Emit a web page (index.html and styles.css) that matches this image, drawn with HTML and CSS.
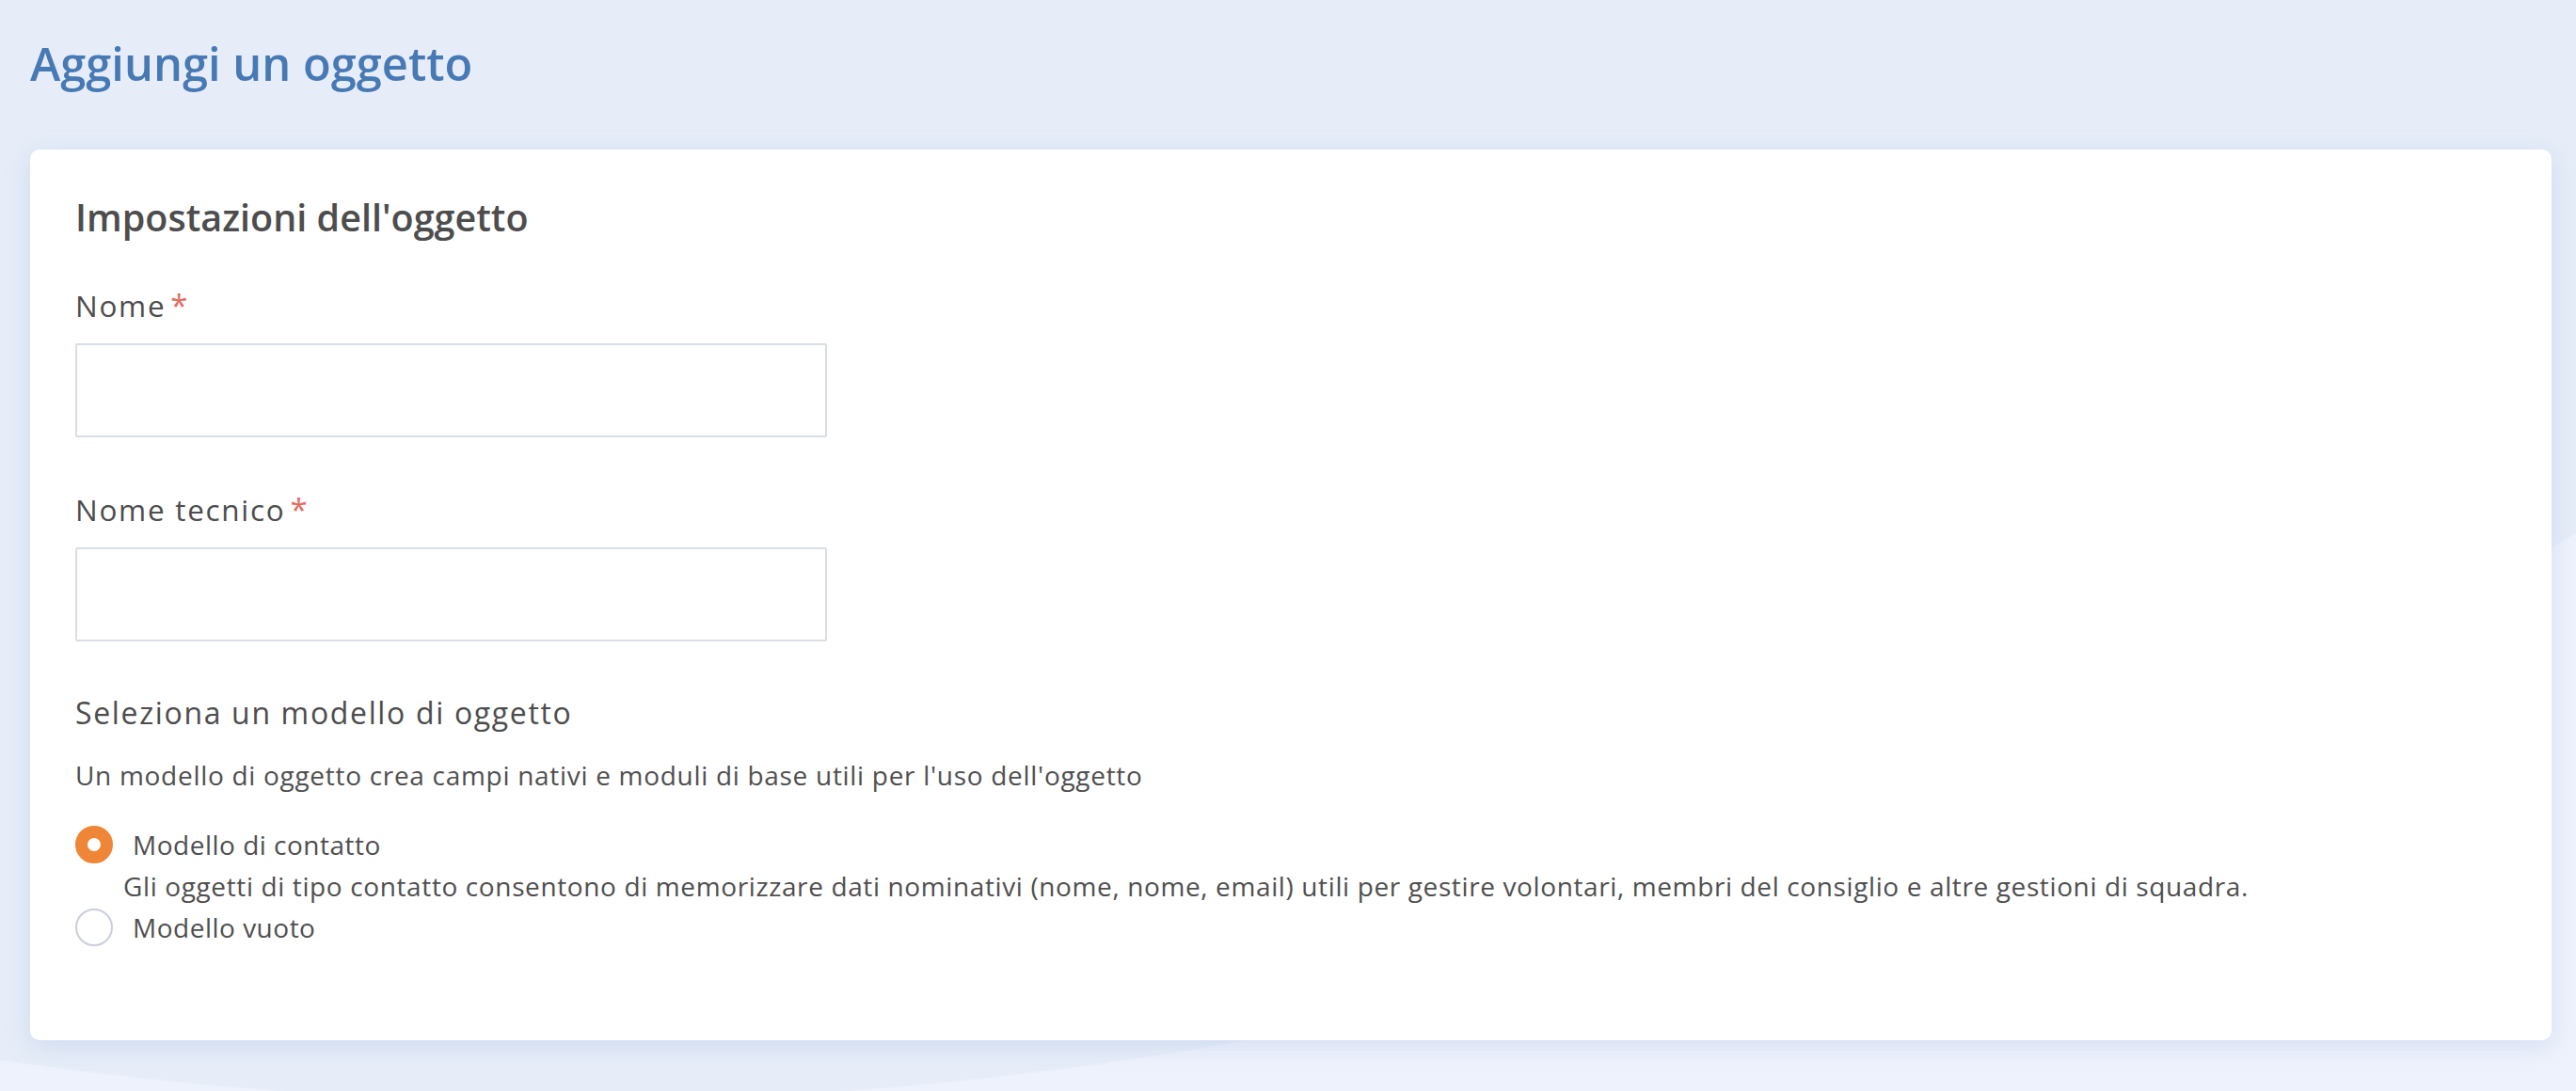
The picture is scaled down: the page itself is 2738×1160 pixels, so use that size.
FILE: index.html
```html
<!DOCTYPE html>
<html lang="it">
<head>
<meta charset="utf-8">
<title>Aggiungi un oggetto</title>
<link rel="stylesheet" href="styles.css">
</head>
<body>
<header class="page-header">
  <h1 class="page-title">Aggiungi un oggetto</h1>
</header>
<main class="card">
  <h2 class="card-title">Impostazioni dell'oggetto</h2>

  <div class="field">
    <label class="field-label" for="nome">Nome<span class="req">*</span></label>
    <input class="text-input" id="nome" type="text">
  </div>

  <div class="field field-next">
    <label class="field-label" for="tecnico">Nome tecnico<span class="req">*</span></label>
    <input class="text-input" id="tecnico" type="text">
  </div>

  <section class="template">
    <h3 class="template-title">Seleziona un modello di oggetto</h3>
    <p class="template-hint">Un modello di oggetto crea campi nativi e moduli di base utili per l'uso dell'oggetto</p>

    <div class="options">
      <div class="option">
        <span class="radio radio-on"></span>
        <span class="option-label">Modello di contatto</span>
      </div>
      <p class="option-desc">Gli oggetti di tipo contatto consentono di memorizzare dati nominativi (nome, nome, email) utili per gestire volontari, membri del consiglio e altre gestioni di squadra.</p>
      <div class="option">
        <span class="radio"></span>
        <span class="option-label">Modello vuoto</span>
      </div>
    </div>
  </section>
</main>
</body>
</html>
```

FILE: styles.css
```css
html, body {
  margin: 0;
  padding: 0;
}

body {
  width: 2738px;
  height: 1160px;
  box-sizing: border-box;
  padding: 0 26px 0 32px;
  overflow: hidden;
  font-family: "Open Sans", "Liberation Sans", sans-serif;
  color: #4f4f4f;
  background: radial-gradient(circle 4089px at 599px -2918px, #e6edf8 4088px, #eef2fc 4090px);
}

.page-header {
  padding-top: 39px;
  height: 159px;
  box-sizing: border-box;
}

.page-title {
  margin: 0;
  font-size: 48.8px;
  line-height: 56px;
  font-weight: 600;
  color: #4779b5;
}

.card {
  background: #ffffff;
  border-radius: 10px;
  box-shadow: 0 6px 26px rgba(150, 170, 220, 0.28);
  padding: 49px 48px 0;
  height: 947px;
  box-sizing: border-box;
}

.card-title {
  margin: 0;
  font-size: 39.5px;
  line-height: 46px;
  font-weight: 600;
  color: #4d4d4d;
}

.field {
  margin-top: 53px;
  display: flex;
  flex-direction: column;
  align-items: flex-start;
}

.field-next {
  margin-top: 59px;
}

.field-label {
  font-size: 31.5px;
  line-height: 36px;
  letter-spacing: 1.7px;
  color: #4d4d4d;
  margin-bottom: 22px;
}

.req {
  color: #e46a5e;
  margin-left: 5px;
  font-size: 33px;
  letter-spacing: 0;
}

.text-input {
  width: 799px;
  height: 100px;
  box-sizing: border-box;
  border: 2px solid #d9dee7;
  border-radius: 2px;
  background: #ffffff;
  margin: 0;
  padding: 0 16px;
  font: inherit;
  outline: none;
}

.template {
  margin-top: 57px;
}

.template-title {
  margin: 0;
  font-size: 32px;
  line-height: 37px;
  font-weight: 500;
  letter-spacing: 1.65px;
  color: #4d4d4d;
}

.template-hint {
  margin: 32px 0 0;
  font-size: 28px;
  line-height: 32px;
  letter-spacing: 0.7px;
  color: #4f4f4f;
}

.options {
  margin-top: 38px;
}

.option {
  display: flex;
  align-items: center;
  gap: 21px;
  height: 40px;
}

.radio {
  width: 40px;
  height: 40px;
  box-sizing: border-box;
  border-radius: 50%;
  border: 2px solid #c9ced9;
  background: #ffffff;
  flex: none;
}

.radio-on {
  border: 13px solid #ef8536;
  background: #ffffff;
}

.option-label {
  font-size: 28px;
  line-height: 32px;
  letter-spacing: 0.5px;
  color: #4f4f4f;
}

.option-desc {
  margin: 8px 0 8px 51px;
  font-size: 28px;
  line-height: 32px;
  letter-spacing: 0.62px;
  color: #4f4f4f;
}
```
